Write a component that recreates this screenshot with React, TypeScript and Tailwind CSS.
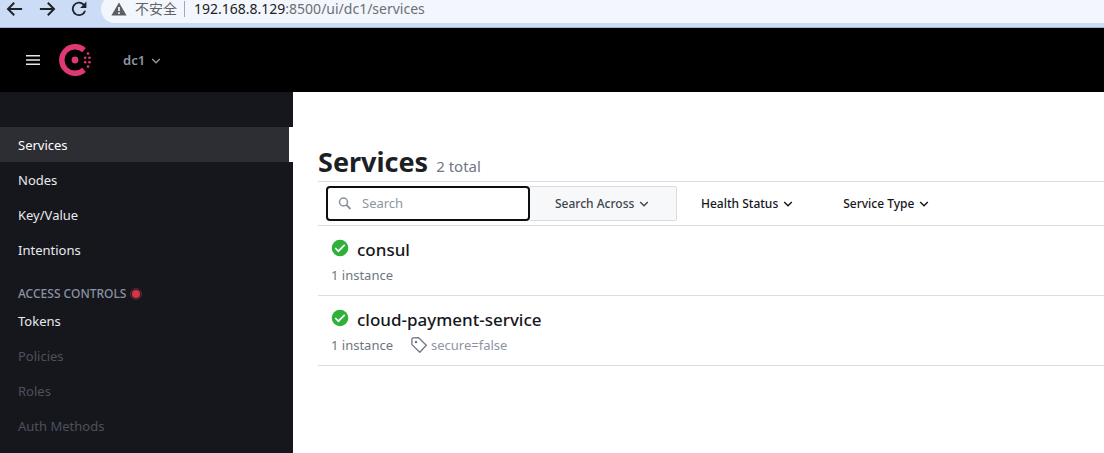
import type { ReactNode } from "react";

function Chevron() {
  return (
    <svg viewBox="0 0 10 10" className="h-[10px] w-[10px] shrink-0" fill="none" stroke="currentColor" strokeWidth="1.400" aria-hidden="true">
      <path d="M1.200 3L5 6.800 8.800 3" />
    </svg>
  );
}

function BrowserIcon({ d }: { d: string }) {
  return (
    <svg viewBox="0 0 24 24" className="h-5 w-5" fill="currentColor" aria-hidden="true">
      <path d={d} />
    </svg>
  );
}

function BrowserBar() {
  return (
    <div className="flex h-7 overflow-hidden border-b border-[#9fb2cf] bg-[#cbdcf6] text-[#202329]">
      <div className="flex h-[18px] items-center gap-3 pl-[5px]">
        <button type="button" aria-label="Back">
          <BrowserIcon d="M20.500 10.800H6.500l5.400-5.400L10.200 3.700 1.900 12l8.300 8.300 1.700-1.700L6.500 13.200h14z" />
        </button>
        <button type="button" aria-label="Forward">
          <BrowserIcon d="M3.500 10.800h14l-5.400-5.400 1.700-1.700L22.100 12l-8.300 8.300-1.700-1.700 5.400-5.400h-14z" />
        </button>
        <button type="button" aria-label="Reload">
          <BrowserIcon d="M18.200 5.800A8.600 8.600 0 1 0 20.400 14h-2.300a6.400 6.400 0 1 1-1.500-6.600L13.300 10.700H20.900V3.100z" />
        </button>
      </div>
      <div className="-mt-[5px] ml-3 flex h-7 flex-1 items-center rounded-l-full bg-[#f3f7fd] pl-[10px] whitespace-nowrap">
        <svg viewBox="0 0 16 14" className="h-[14px] w-4 shrink-0" aria-hidden="true">
          <path d="M8 0.500L15.600 13.500H0.400z" fill="#5b5f65" />
          <path d="M7.200 5h1.600v4H7.200zM7.200 10.300h1.600v1.600H7.200z" fill="#fff" />
        </svg>
        <span className="ml-2 text-sm text-[#5f6368]">不安全</span>
        <span className="mr-[9px] ml-[7px] h-4 w-px bg-[#a5a9af]" />
        <span className="text-sm text-[#202124]">
          192.168.8.129<span className="text-[#6b6f75]">:8500/ui/dc1/services</span>
        </span>
      </div>
    </div>
  );
}

function ConsulLogo() {
  return (
    <svg viewBox="0 0 32 32" className="h-8 w-8" fill="#e03875" role="img" aria-label="Consul">
      <path d="M26.800 27.900A16 16 0 1 1 26.800 4.100L23.300 8.200A10.600 10.600 0 1 0 23.300 23.800z" />
      <circle cx="16" cy="16" r="3.400" />
      <circle cx="26.200" cy="13.700" r="1.300" />
      <circle cx="26.200" cy="18.300" r="1.300" />
      <circle cx="29" cy="9.500" r="1.300" />
      <circle cx="30.500" cy="13.700" r="1.300" />
      <circle cx="30.500" cy="18.300" r="1.300" />
      <circle cx="29" cy="22.600" r="1.300" />
    </svg>
  );
}

function Header() {
  return (
    <header className="flex h-16 items-center bg-black pl-[26px]">
      <button type="button" aria-label="Menu" className="text-[#e6e7ea]">
        <svg viewBox="0 0 14 12" className="h-3 w-[14px]" fill="currentColor" aria-hidden="true">
          <path d="M0 1h14v1.600H0zM0 5.200h14v1.600H0zM0 9.400h14V11H0z" />
        </svg>
      </button>
      <a href="#home" className="ml-[19px]">
        <ConsulLogo />
      </a>
      <button type="button" className="ml-8 flex items-center gap-[6px] pt-0.5 text-[13px] font-semibold text-[#8e96a3]">
        dc1
        <Chevron />
      </button>
    </header>
  );
}

function NavItem({ children, active = false, muted = false }: { children: ReactNode; active?: boolean; muted?: boolean }) {
  const tone = active
    ? "border-r-4 border-white bg-[#2d2e33] text-white"
    : muted
      ? "text-[#4b515c]"
      : "text-[#e8eaed]";
  return (
    <li>
      <a href="#nav" className={`flex h-[35px] items-center pt-0.5 pl-[18px] text-[13px] ${tone}`}>
        {children}
      </a>
    </li>
  );
}

function Sidebar() {
  return (
    <nav className="w-[293px] shrink-0 bg-[#16171c] pt-[35px]">
      <ul>
        <NavItem active>Services</NavItem>
        <NavItem>Nodes</NavItem>
        <NavItem>Key/Value</NavItem>
        <NavItem>Intentions</NavItem>
      </ul>
      <h2 className="mt-[18px] flex h-[18px] items-center gap-1 pl-[18px] text-xs font-medium text-[#8a92a3]">
        ACCESS CONTROLS
        <svg viewBox="0 0 12 12" className="h-3 w-3" aria-hidden="true">
          <circle cx="6" cy="6" r="5.300" fill="none" stroke="#7a2633" />
          <circle cx="6" cy="6" r="4" fill="#d0374a" />
        </svg>
      </h2>
      <ul>
        <NavItem>Tokens</NavItem>
        <NavItem muted>Policies</NavItem>
        <NavItem muted>Roles</NavItem>
        <NavItem muted>Auth Methods</NavItem>
      </ul>
    </nav>
  );
}

function Toolbar() {
  return (
    <div className="flex h-[45px] items-center border-y border-[#dbdde2] pl-2 text-xs font-medium text-[#16171c]">
      <label className="flex h-[35px] w-[204px] items-center rounded-[4px] border-2 border-[#0d0e12] bg-white pl-[10px]">
        <svg viewBox="0 0 14 14" className="h-[14px] w-[14px] shrink-0" fill="none" stroke="#8b919d" aria-hidden="true">
          <circle cx="5.500" cy="5" r="4" strokeWidth="1.500" />
          <path d="M8.300 7.800l4.200 4.200" strokeWidth="1.800" />
        </svg>
        <input
          type="text"
          aria-label="Search"
          placeholder="Search"
          className="ml-[10px] w-full min-w-0 bg-transparent text-[13px] font-normal outline-none placeholder:text-[#8f95a1]"
        />
      </label>
      <button type="button" className="flex h-[35px] w-[147px] items-center gap-[5px] rounded-r-[2px] border border-l-0 border-[#d8dbe3] bg-[#f7f8fa] pl-[25px] text-[#40444d]">
        Search Across
        <Chevron />
      </button>
      <button type="button" className="ml-6 flex items-center gap-[5px]">
        Health Status
        <Chevron />
      </button>
      <button type="button" className="ml-[50px] flex items-center gap-[5px]">
        Service Type
        <Chevron />
      </button>
    </div>
  );
}

function ServiceRow({ name, tag }: { name: string; tag?: string }) {
  return (
    <li className="h-[70px] border-b border-[#dcdee1] pt-[11px] pl-[13px]">
      <a href="#service" className="flex h-[26px] items-center gap-2 text-[17px] leading-[26px] font-medium text-[#16171c]">
        <svg viewBox="0 0 18 18" className="mb-1 h-[18px] w-[18px]" aria-hidden="true">
          <circle cx="9" cy="9" r="8.300" fill="#2eb039" />
          <path d="M4.200 9l3.200 3.200 6.300-6.400" fill="none" stroke="#fff" strokeWidth="1.700" />
        </svg>
        {name}
      </a>
      <div className="flex h-[26px] items-center text-[13px] text-[#6f7682]">
        <span>1 instance</span>
        {tag && (
          <span className="ml-[18px] flex items-center gap-1 text-[#8e95a2]">
            <svg viewBox="0 0 16 16" className="mb-[2px] h-4 w-4" fill="none" stroke="#6f7682" strokeWidth="1.300" strokeLinejoin="round" aria-hidden="true">
              <path d="M0.900 1.900Q0.900 0.900 1.900 0.900L7.600 0.700 15.300 8.200 8.800 15.200 0.900 7.600z" />
              <circle cx="5" cy="4.900" r="0.600" fill="#6f7682" />
            </svg>
            {tag}
          </span>
        )}
      </div>
    </li>
  );
}

export default function App() {
  return (
    <div className="flex min-h-screen flex-col bg-white font-['Noto_Sans','Noto_Sans_CJK_SC',sans-serif]">
      <BrowserBar />
      <Header />
      <div className="flex flex-1">
        <Sidebar />
        <main className="min-w-0 flex-1 pt-[51px] pl-[25px]">
          <div className="flex h-[38px] items-baseline gap-2">
            <h1 className="text-[27px] leading-[38px] font-bold text-[#1c1f24]">Services</h1>
            <span className="text-[15px] text-[#6f7682]">2 total</span>
          </div>
          <Toolbar />
          <ul>
            <ServiceRow name="consul" />
            <ServiceRow name="cloud-payment-service" tag="secure=false" />
          </ul>
        </main>
      </div>
    </div>
  );
}
